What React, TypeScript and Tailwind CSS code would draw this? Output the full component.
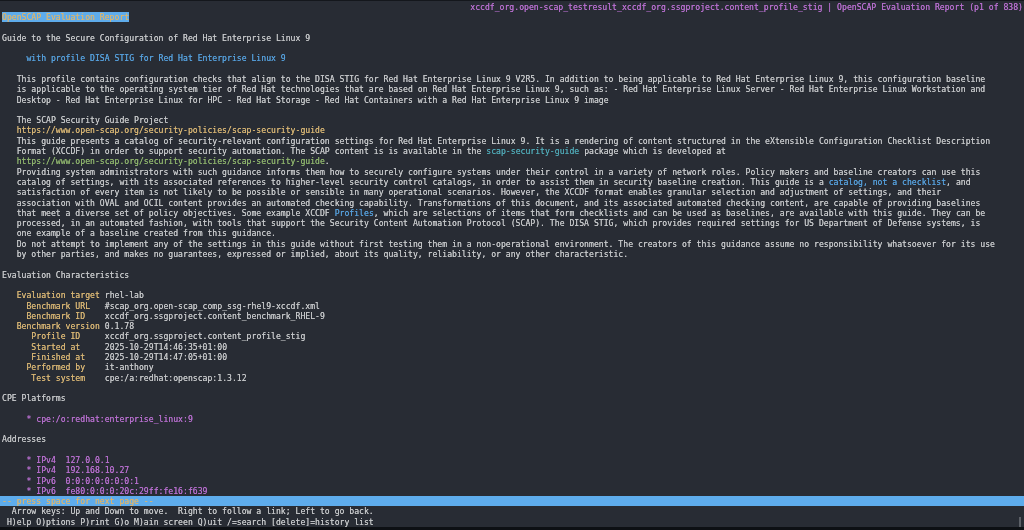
import React from "react";

type Seg = [string, string?];
type Line = Seg[];

// terminal theme colours, a bit muted like the capture
const yellow = "text-[#d6b473]";
const blue = "text-[#559fdb]";
const purple = "text-[#b66ecd]";
const teal = "text-[#4ea6b3]";
const green = "text-[#8db36c]";

const plain = (s: string): Line => [[s]];
const color = (s: string, c: string): Line => [[s, c]];
const blank: Line = [[""]];

const field = (label: string, value: string): Line => [[label, yellow], [value]];

const lines: Line[] = [
  blank,
  [["OpenSCAP Evaluation Report", "text-[#d6b473] bg-[#5eacec]"]],
  blank,
  plain("Guide to the Secure Configuration of Red Hat Enterprise Linux 9"),
  blank,
  color("     with profile DISA STIG for Red Hat Enterprise Linux 9", blue),
  blank,
  plain("   This profile contains configuration checks that align to the DISA STIG for Red Hat Enterprise Linux 9 V2R5. In addition to being applicable to Red Hat Enterprise Linux 9, this configuration baseline"),
  plain("   is applicable to the operating system tier of Red Hat technologies that are based on Red Hat Enterprise Linux 9, such as: - Red Hat Enterprise Linux Server - Red Hat Enterprise Linux Workstation and"),
  plain("   Desktop - Red Hat Enterprise Linux for HPC - Red Hat Storage - Red Hat Containers with a Red Hat Enterprise Linux 9 image"),
  blank,
  plain("   The SCAP Security Guide Project"),
  color("   https://www.open-scap.org/security-policies/scap-security-guide", yellow),
  plain("   This guide presents a catalog of security-relevant configuration settings for Red Hat Enterprise Linux 9. It is a rendering of content structured in the eXtensible Configuration Checklist Description"),
  [["   Format (XCCDF) in order to support security automation. The SCAP content is is available in the "], ["scap-security-guide", teal], [" package which is developed at"]],
  [["   https://www.open-scap.org/security-policies/scap-security-guide", green], ["."]],
  plain("   Providing system administrators with such guidance informs them how to securely configure systems under their control in a variety of network roles. Policy makers and baseline creators can use this"),
  [["   catalog of settings, with its associated references to higher-level security control catalogs, in order to assist them in security baseline creation. This guide is a "], ["catalog, not a checklist", blue], [", and"]],
  plain("   satisfaction of every item is not likely to be possible or sensible in many operational scenarios. However, the XCCDF format enables granular selection and adjustment of settings, and their"),
  plain("   association with OVAL and OCIL content provides an automated checking capability. Transformations of this document, and its associated automated checking content, are capable of providing baselines"),
  [["   that meet a diverse set of policy objectives. Some example XCCDF "], ["Profiles", blue], [", which are selections of items that form checklists and can be used as baselines, are available with this guide. They can be"]],
  plain("   processed, in an automated fashion, with tools that support the Security Content Automation Protocol (SCAP). The DISA STIG, which provides required settings for US Department of Defense systems, is"),
  plain("   one example of a baseline created from this guidance."),
  plain("   Do not attempt to implement any of the settings in this guide without first testing them in a non-operational environment. The creators of this guidance assume no responsibility whatsoever for its use"),
  plain("   by other parties, and makes no guarantees, expressed or implied, about its quality, reliability, or any other characteristic."),
  blank,
  plain("Evaluation Characteristics"),
  blank,
  field("   Evaluation target ", "rhel-lab"),
  field("     Benchmark URL   ", "#scap_org.open-scap_comp_ssg-rhel9-xccdf.xml"),
  field("     Benchmark ID    ", "xccdf_org.ssgproject.content_benchmark_RHEL-9"),
  field("   Benchmark version ", "0.1.78"),
  field("      Profile ID     ", "xccdf_org.ssgproject.content_profile_stig"),
  field("      Started at     ", "2025-10-29T14:46:35+01:00"),
  field("      Finished at    ", "2025-10-29T14:47:05+01:00"),
  field("     Performed by    ", "it-anthony"),
  field("      Test system    ", "cpe:/a:redhat:openscap:1.3.12"),
  blank,
  plain("CPE Platforms"),
  blank,
  color("     * cpe:/o:redhat:enterprise_linux:9", purple),
  blank,
  plain("Addresses"),
  blank,
  color("     * IPv4  127.0.0.1", purple),
  color("     * IPv4  192.168.10.27", purple),
  color("     * IPv6  0:0:0:0:0:0:0:1", purple),
  color("     * IPv6  fe80:0:0:0:20c:29ff:fe16:f639", purple),
];

function Row({ line }: { line: Line }) {
  return (
    <div className="h-[10.32px] leading-[10.32px] whitespace-pre">
      {line.map(([text, cls], i) => (
        <span key={i} className={cls}>
          {text}
        </span>
      ))}
    </div>
  );
}

export default function App() {
  return (
    <div className="relative h-[530px] w-[1024px] overflow-hidden border-t border-b-[3px] border-t-[#14171c] border-b-[#0d1014] bg-[#282c34] font-['DejaVu_Sans_Mono','Liberation_Mono',monospace] text-[8.13px] text-[#c4c6c8] blur-[0.3px] [text-shadow:0_0_0.5px_currentColor]">
      <div className="absolute right-[1px] top-0 h-[10.32px] leading-[12.5px] whitespace-pre text-[#b66ecd]">
        xccdf_org.open-scap_testresult_xccdf_org.ssgproject.content_profile_stig | OpenSCAP Evaluation Report (p1 of 838)
      </div>
      {/* terminal cursor */}
      <div className="absolute right-[3px] bottom-0 h-[10px] w-[2px] bg-[#5c6067]" />
      <div className="flex h-full flex-col pl-[2px] pt-[1px]">
        {lines.map((line, i) => (
          <Row key={i} line={line} />
        ))}
        <div className="-ml-[2px] h-[10.32px] bg-[#5eacec] pl-[2px] leading-[10.32px] whitespace-pre text-[#d6b473]">
          -- press space for next page --
        </div>
        <div className="h-[10.32px] leading-[10.32px] whitespace-pre">  Arrow keys: Up and Down to move.  Right to follow a link; Left to go back.</div>
        <div className="h-[10.32px] leading-[10.32px] whitespace-pre"> H)elp O)ptions P)rint G)o M)ain screen Q)uit /=search [delete]=history list</div>
      </div>
    </div>
  );
}
